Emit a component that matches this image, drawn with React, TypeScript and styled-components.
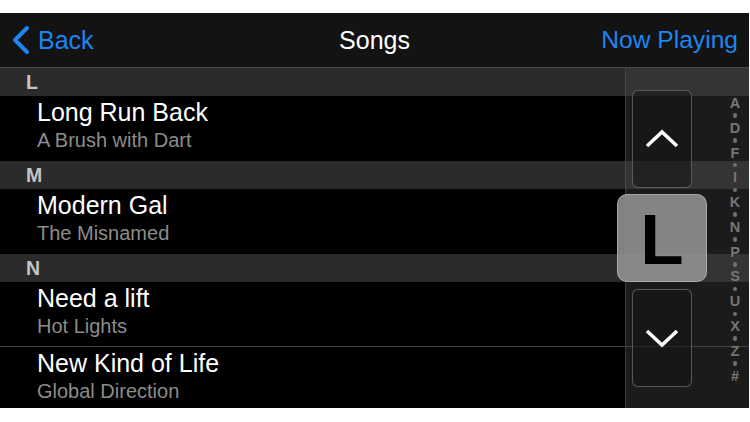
import React from "react";
import styled, { createGlobalStyle } from "styled-components";

const Global = createGlobalStyle`
  html, body { margin: 0; padding: 0; background: #ffffff; }
  body { font-family: "Liberation Sans", Arial, sans-serif; }
`;

const Page = styled.div`
  width: 750px;
  height: 422px;
  padding-top: 13px;
  box-sizing: border-box;
`;

const Screen = styled.div`
  position: relative;
  width: 749px;
  height: 395px;
  background: #000;
  overflow: hidden;
  display: flex;
  flex-direction: column;
`;

const NavBar = styled.div`
  height: 54px;
  flex: none;
  background: #131313;
  border-bottom: 1px solid #4a4a4a;
  display: grid;
  grid-template-columns: 1fr auto 1fr;
  align-items: center;
  font-size: 25px;
  line-height: 54px;
`;

const BackButton = styled.div`
  display: flex;
  align-items: center;
  gap: 7px;
  padding-left: 11px;
  color: #1c86f2;
`;

const NavTitle = styled.div`
  color: #fff;
`;

const NavAction = styled.div`
  justify-self: end;
  padding-right: 11px;
  color: #1c86f2;
  font-size: 24.6px;
`;

const SectionHeader = styled.div`
  height: 28px;
  flex: none;
  background: #2b2b2b;
  color: #c4c4c4;
  font-weight: 700;
  font-size: 19.5px;
  line-height: 29px;
  padding-left: 26px;
`;

const Row = styled.div<{ $divider?: boolean }>`
  height: 65px;
  flex: none;
  box-sizing: border-box;
  padding: 2px 0 0 37px;
  display: flex;
  flex-direction: column;
  gap: 3px;
  border-bottom: ${(p) => (p.$divider ? "1px solid #444" : "none")};
`;

const Title = styled.div`
  color: #fff;
  font-size: 25px;
  line-height: 28px;
`;

const Subtitle = styled.div`
  color: #8c8c8c;
  font-size: 20px;
  line-height: 23px;
`;

const IndexPanel = styled.div`
  position: absolute;
  top: 55px;
  right: 0;
  bottom: 0;
  width: 124px;
  box-sizing: border-box;
  background: rgba(64, 64, 64, 0.42);
  border-left: 1px solid rgba(90, 90, 90, 0.5);
  display: grid;
  grid-template-columns: 60px 26px;
  column-gap: 30px;
  padding-left: 6px;
`;

const ButtonColumn = styled.div`
  display: flex;
  flex-direction: column;
  justify-content: space-between;
  padding: 22px 0 21px;
`;

const ScrollButton = styled.div`
  height: 98px;
  box-sizing: border-box;
  border: 1.5px solid rgba(110, 110, 110, 0.75);
  border-radius: 6px;
  background: rgba(20, 20, 20, 0.55);
  display: flex;
  align-items: center;
  justify-content: center;
`;

const LetterColumn = styled.div`
  display: flex;
  flex-direction: column;
  align-items: center;
  padding-top: 29px;
`;

const IndexLetter = styled.div`
  height: 12.4px;
  line-height: 12.4px;
  font-size: 14.5px;
  font-weight: 700;
  color: #767676;
`;

const IndexDot = styled.div`
  height: 12.4px;
  display: flex;
  align-items: center;
  &::after {
    content: "";
    width: 4.5px;
    height: 4.5px;
    border-radius: 50%;
    background: #707070;
  }
`;

const LetterBadge = styled.div`
  position: absolute;
  left: 617px;
  top: 181px;
  width: 90px;
  height: 88px;
  box-sizing: border-box;
  border-radius: 10px;
  border: 1px solid rgba(185, 185, 185, 0.7);
  background: rgba(150, 150, 150, 0.86);
  display: flex;
  align-items: center;
  justify-content: center;
  color: #000;
  font-size: 71px;
  font-weight: 700;
  line-height: 1;
  padding-top: 2px;
`;

const Chevron = ({ dir }: { dir: "up" | "down" }) => (
  <svg width="34" height="20" viewBox="0 0 34 20">
    <polyline
      points={dir === "up" ? "2,17 17,3 32,17" : "2,3 17,17 32,3"}
      fill="none"
      stroke="#fff"
      strokeWidth="3.5"
      strokeLinecap="butt"
      strokeLinejoin="miter"
    />
  </svg>
);

const BackChevron = () => (
  <svg width="20" height="30" viewBox="0 0 20 30">
    <polyline
      points="16,3 4,15 16,27"
      fill="none"
      stroke="#1c86f2"
      strokeWidth="4"
      strokeLinecap="round"
      strokeLinejoin="round"
    />
  </svg>
);

type Item =
  | { kind: "header"; label: string }
  | { kind: "song"; title: string; artist: string; divider?: boolean };

const items: Item[] = [
  { kind: "header", label: "L" },
  { kind: "song", title: "Long Run Back", artist: "A Brush with Dart" },
  { kind: "header", label: "M" },
  { kind: "song", title: "Modern Gal", artist: "The Misnamed" },
  { kind: "header", label: "N" },
  { kind: "song", title: "Need a lift", artist: "Hot Lights", divider: true },
  { kind: "song", title: "New Kind of Life", artist: "Global Direction" },
];

const letters = ["A", "D", "F", "I", "K", "N", "P", "S", "U", "X", "Z", "#"];

export default function App() {
  return (
    <Page>
      <Global />
      <Screen>
        <NavBar>
          <BackButton>
            <BackChevron />
            Back
          </BackButton>
          <NavTitle>Songs</NavTitle>
          <NavAction>Now Playing</NavAction>
        </NavBar>
        {items.map((it, i) =>
          it.kind === "header" ? (
            <SectionHeader key={i}>{it.label}</SectionHeader>
          ) : (
            <Row key={i} $divider={it.divider}>
              <Title>{it.title}</Title>
              <Subtitle>{it.artist}</Subtitle>
            </Row>
          )
        )}
        <IndexPanel>
          <ButtonColumn>
            <ScrollButton>
              <Chevron dir="up" />
            </ScrollButton>
            <ScrollButton>
              <Chevron dir="down" />
            </ScrollButton>
          </ButtonColumn>
          <LetterColumn>
            {letters.map((l, i) => (
              <React.Fragment key={l}>
                {i > 0 && <IndexDot />}
                <IndexLetter>{l}</IndexLetter>
              </React.Fragment>
            ))}
          </LetterColumn>
        </IndexPanel>
        <LetterBadge>L</LetterBadge>
      </Screen>
    </Page>
  );
}
